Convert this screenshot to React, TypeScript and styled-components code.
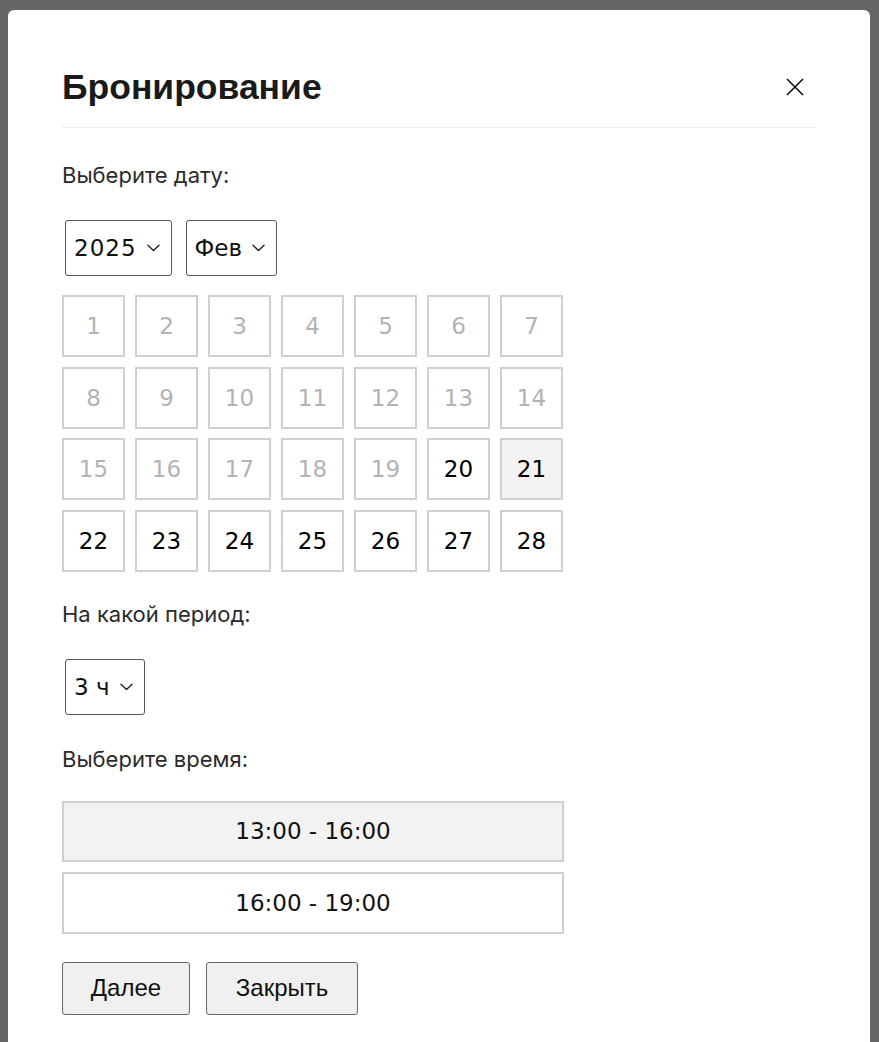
import React, { useState } from 'react'
import styled, { createGlobalStyle } from 'styled-components'

const GlobalStyle = createGlobalStyle`
  html, body {
    margin: 0;
    padding: 0;
    background: #666;
    height: 100%;
    overflow: hidden;
  }
  * {
    box-sizing: border-box;
  }
`

const Backdrop = styled.div`
  min-height: 1042px;
  padding: 10px 9px 0 8px;
  background: #666;
`
const Modal = styled.div`
  background: #fff;
  border-radius: 6px 6px 0 0;
  padding: 57px 54px 40px;
  min-height: 1032px;
  font-family: Inter, 'Noto Sans', sans-serif;
  color: #222;
`
const Header = styled.div`
  display: flex;
  align-items: center;
  justify-content: space-between;
  padding-bottom: 20px;
  border-bottom: 1px solid #eee;
`
const Title = styled.h2`
  margin: 0;
  font-family: 'Liberation Sans', Arial, sans-serif;
  font-weight: bold;
  font-size: 35.5px;
  line-height: 40px;
  color: #1a1a1a;
`
const CloseButton = styled.button`
  border: none;
  background: none;
  padding: 0;
  margin-right: 10px;
  width: 22px;
  height: 22px;
  cursor: pointer;
  display: flex;
`
const Label = styled.p<{ $top: number }>`
  margin: ${(p) => p.$top}px 0 0;
  font-size: 22px;
  line-height: 24px;
  color: #2b2b2b;
`
const SelectRow = styled.div<{ $top: number }>`
  display: flex;
  gap: 14px;
  margin: ${(p) => p.$top}px 0 0 3px;
`
const Select = styled.div`
  display: flex;
  align-items: center;
  gap: 10px;
  height: 56px;
  padding: 0 11px 0 8px;
  border: 1px solid #555;
  border-radius: 3px;
  font-family: 'DejaVu Sans', sans-serif;
  font-size: 23px;
  color: #111;
  cursor: pointer;
`
const Digits = styled.span`
  letter-spacing: 1px;
`
const Grid = styled.div`
  display: grid;
  grid-template-columns: repeat(7, 63px);
  grid-auto-rows: 62px;
  column-gap: 10px;
  row-gap: 9.5px;
  margin-top: 19px;
`
const Day = styled.button<{ $disabled?: boolean; $active?: boolean }>`
  border: 2px solid #d0d0d0;
  background: ${(p) => (p.$active ? '#f2f2f2' : '#fff')};
  color: ${(p) => (p.$disabled ? '#b3b3b3' : '#000')};
  font-family: 'DejaVu Sans', sans-serif;
  font-size: 23px;
  padding: 0;
  cursor: ${(p) => (p.$disabled ? 'default' : 'pointer')};
`
const Slots = styled.div`
  display: flex;
  flex-direction: column;
  gap: 10px;
  width: 502px;
  margin-top: 30px;
`
const Slot = styled.button<{ $active?: boolean }>`
  height: 61.5px;
  border: 2px solid #d0d0d0;
  background: ${(p) => (p.$active ? '#f2f2f2' : '#fff')};
  font-family: 'DejaVu Sans', sans-serif;
  font-size: 23px;
  color: #111;
  cursor: pointer;
`
const Actions = styled.div`
  display: flex;
  gap: 16px;
  margin-top: 28px;
`
const ActionButton = styled.button<{ $width: number }>`
  width: ${(p) => p.$width}px;
  height: 53px;
  border: 1px solid #666;
  border-radius: 3px;
  background: #f0f0f0;
  font-family: 'Liberation Sans', Arial, sans-serif;
  font-size: 24px;
  color: #111;
  cursor: pointer;
`

const Chevron = () => (
  <svg width="13" height="8" viewBox="0 0 13 8" fill="none">
    <path d="M1 1.2l5.5 5.3L12 1.2" stroke="#222" strokeWidth="1.4" strokeLinecap="round" strokeLinejoin="round" />
  </svg>
)

const CloseIcon = () => (
  <svg width="22" height="22" viewBox="0 0 22 22" fill="none">
    <path d="M3 3l16 16M19 3L3 19" stroke="#111" strokeWidth="1.6" />
  </svg>
)

const days = Array.from({ length: 28 }, (_, i) => i + 1)
const slots = ['13:00 - 16:00', '16:00 - 19:00']

const App: React.FC = () => {
  const [day, setDay] = useState(21)
  const [slot, setSlot] = useState(0)
  return (
    <Backdrop>
      <GlobalStyle />
      <Modal>
        <Header>
          <Title>Бронирование</Title>
          <CloseButton aria-label="Закрыть">
            <CloseIcon />
          </CloseButton>
        </Header>

        <Label $top={35}>Выберите дату:</Label>
        <SelectRow $top={33}>
          <Select>
            <Digits>2025</Digits> <Chevron />
          </Select>
          <Select>
            Фев <Chevron />
          </Select>
        </SelectRow>

        <Grid>
          {days.map((d) => (
            <Day key={d} $disabled={d < 20} $active={d === day} onClick={() => d >= 20 && setDay(d)}>
              {d}
            </Day>
          ))}
        </Grid>

        <Label $top={30}>На какой период:</Label>
        <SelectRow $top={33}>
          <Select>
            3 ч <Chevron />
          </Select>
        </SelectRow>

        <Label $top={32}>Выберите время:</Label>
        <Slots>
          {slots.map((s, i) => (
            <Slot key={s} $active={i === slot} onClick={() => setSlot(i)}>
              {s}
            </Slot>
          ))}
        </Slots>

        <Actions>
          <ActionButton $width={128}>Далее</ActionButton>
          <ActionButton $width={152}>Закрыть</ActionButton>
        </Actions>
      </Modal>
    </Backdrop>
  )
}

export default App
